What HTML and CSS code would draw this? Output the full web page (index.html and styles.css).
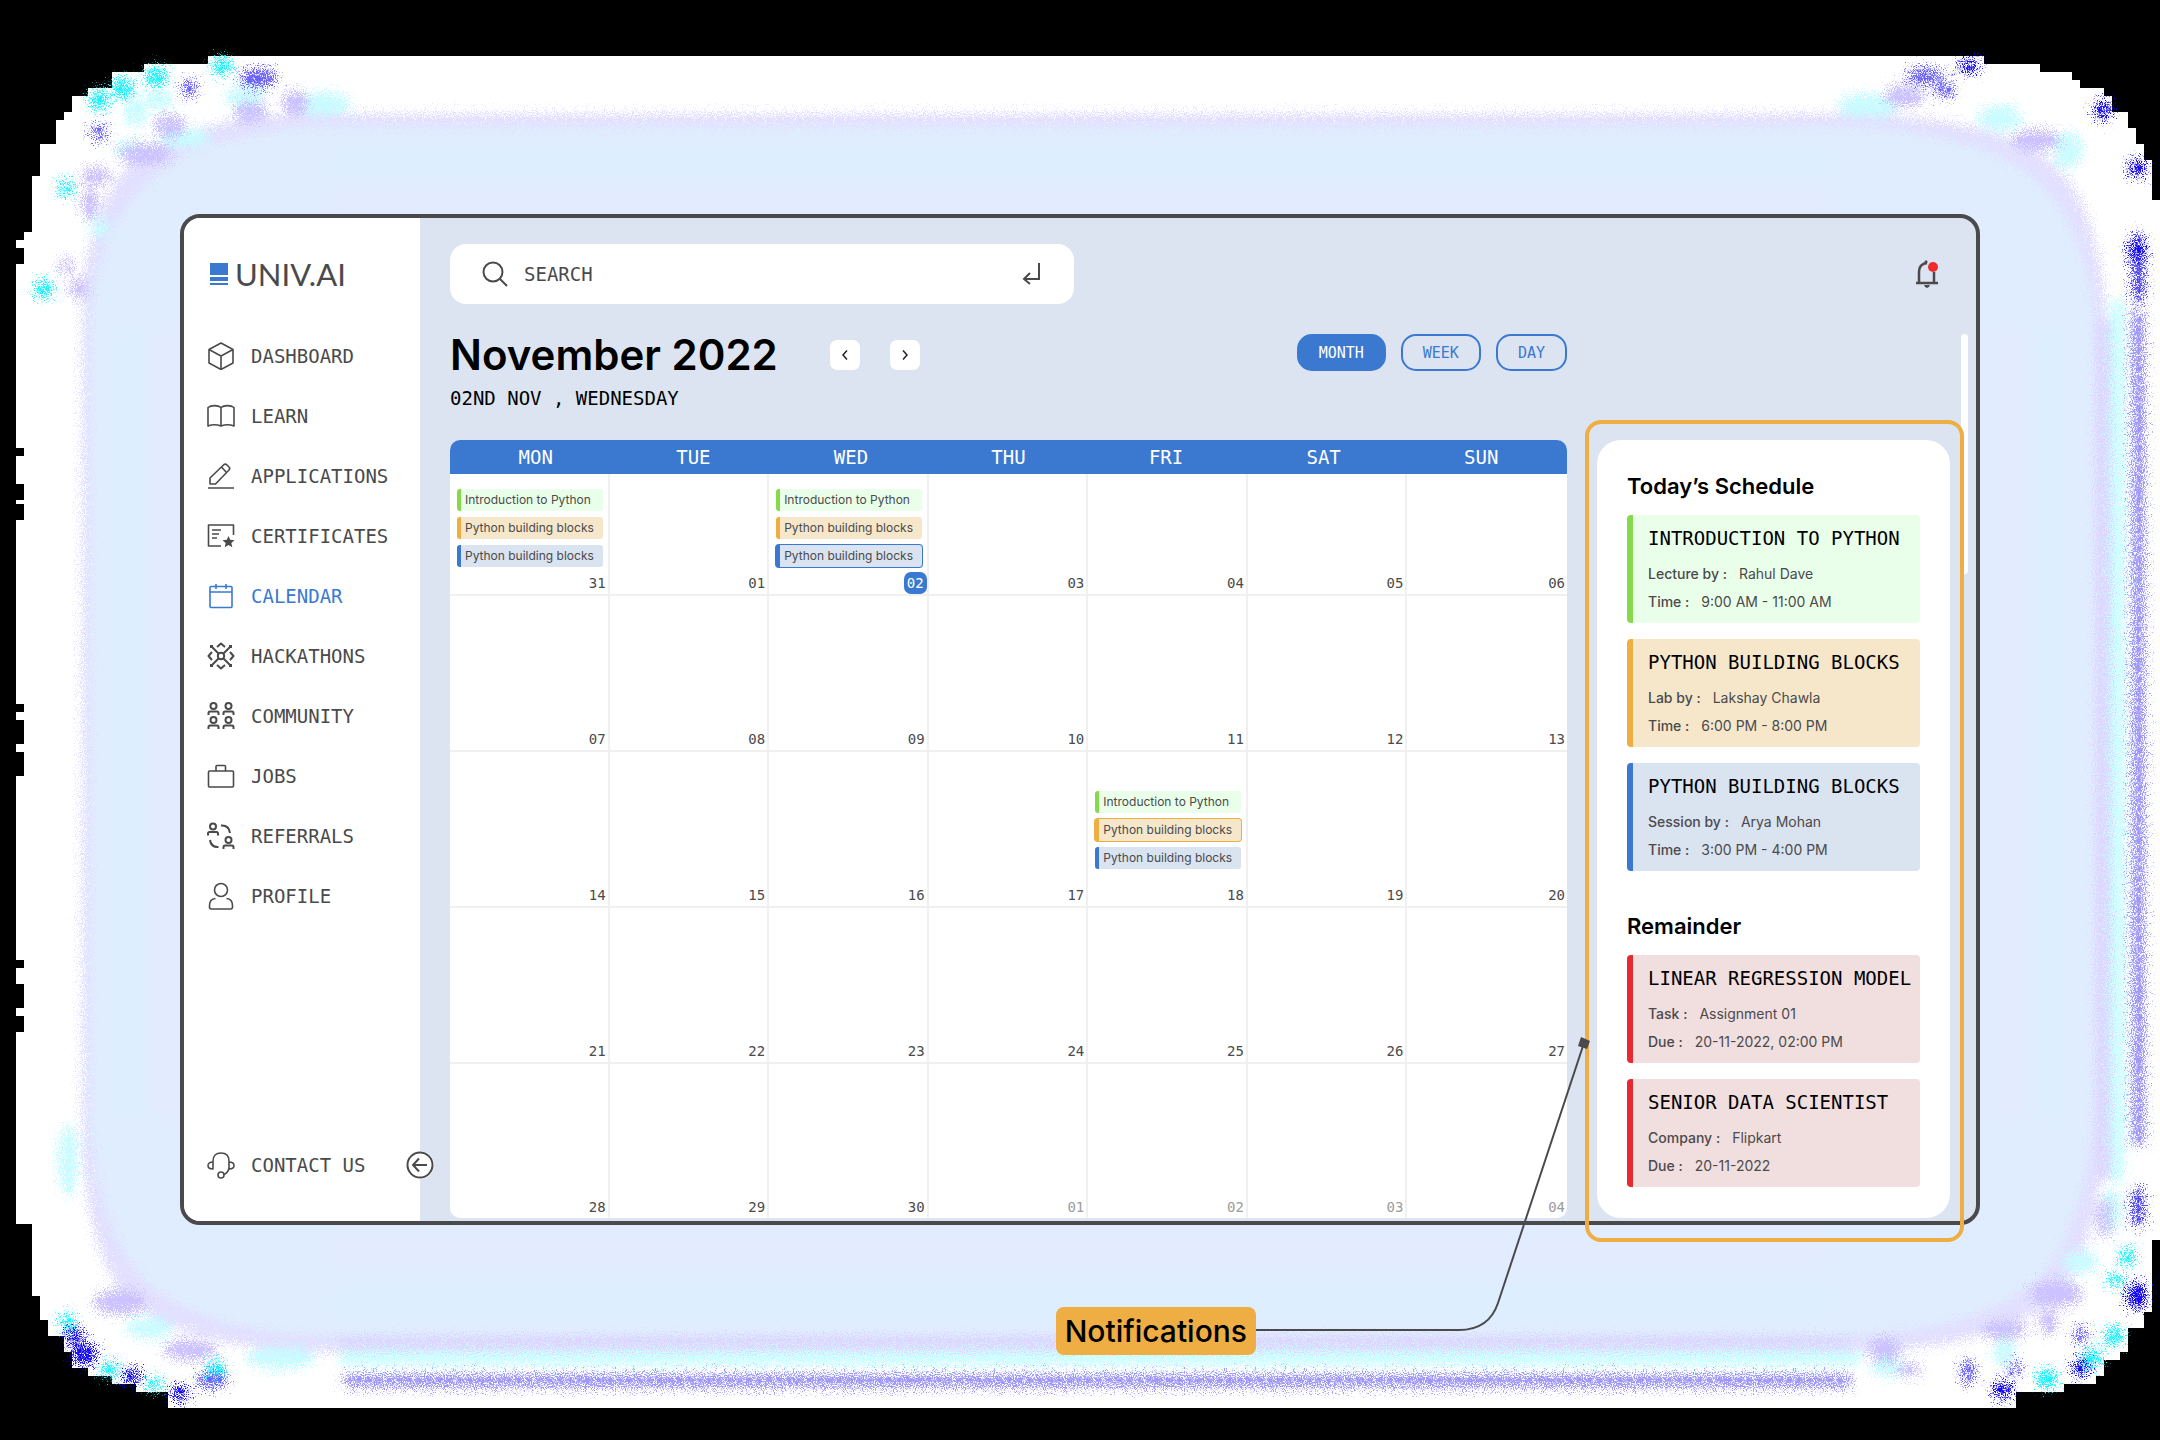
FILE: index.html
```html
<!DOCTYPE html>
<html lang="en">
<head>
<meta charset="utf-8">
<title>UNIV.AI Calendar</title>
<meta name="viewport" content="width=device-width, initial-scale=1">
<link rel="stylesheet" href="styles.css">
</head>
<body>
<div class="stage">
  <svg class="backdrop" viewBox="0 0 2160 1440" preserveAspectRatio="none" aria-hidden="true">
    <defs>
      <filter id="spray" x="-50" y="-50" width="2260" height="1540" filterUnits="userSpaceOnUse" color-interpolation-filters="sRGB">
        <feGaussianBlur in="SourceGraphic" stdDeviation="2" result="soft"/>
        <feTurbulence type="fractalNoise" baseFrequency="0.9" numOctaves="1" seed="4" result="noise"/>
        <feDisplacementMap in="soft" in2="noise" scale="44" xChannelSelector="R" yChannelSelector="G"/>
      </filter>
      <filter id="soft" x="-50" y="-50" width="2260" height="1540" filterUnits="userSpaceOnUse"><feGaussianBlur stdDeviation="10"/></filter>
    </defs>
    <path fill="#fff" d="M208 56H1984V64H2040V72H2072V80H2080V88H2104V96H2112V112H2128V128H2136V144H2144V160H2152V200H2160V1240H2152V1312H2144V1328H2128V1352H2120V1360H2104V1376H2096V1384H2064V1392H2016V1408H168V1392H136V1384H112V1376H88V1368H72V1352H64V1336H48V1320H40V1296H32V1224H16V1032H24V1016H16V1008H24V984H16V968H24V960H16V776H24V752H16V744H24V720H16V712H24V704H16V520H24V504H16V500H24V484H16V456H24V448H16V264H24V248H16V240H24V232H32V176H40V144H56V120H64V112H72V96H88V88H112V72H144V64H208Z"/>
    <g filter="url(#spray)">
      <path fill="#e2dfff" d="M310 114H1850Q2020 116 2068 180 2104 230 2106 330V1100Q2104 1230 2064 1290 2010 1350 1840 1352H330Q170 1350 120 1290 84 1240 82 1120V310Q84 220 126 168 180 116 310 114Z"/>
      <path fill="#e0edff" d="M330 126H1840Q2000 132 2050 195 2090 240 2094 330V1100Q2090 1210 2046 1270 1990 1332 1840 1336H330Q190 1332 140 1275 94 1220 90 1110V320Q96 235 144 186 200 130 330 126Z"/>
      <path stroke="#ccffff" stroke-width="14" d="M340 1358H1860M2117 300V1180"/>
      <path stroke="#dcd6ff" stroke-width="12" d="M340 1342H1850M2104 320V1180"/>
      <path stroke="#9b93f8" stroke-width="11" d="M345 1381H1850M2138 310V1145"/>
      <path stroke="#4a40ee" stroke-width="10" d="M2138 235V300M2138 1190V1225"/>
      <g fill="#c9fbff">
        <ellipse cx="322" cy="104" rx="28" ry="12"/><ellipse cx="135" cy="112" rx="10" ry="14"/><ellipse cx="158" cy="100" rx="14" ry="9"/>
        <ellipse cx="185" cy="138" rx="26" ry="10"/><ellipse cx="130" cy="148" rx="16" ry="8"/><ellipse cx="245" cy="96" rx="20" ry="9"/>
        <ellipse cx="1868" cy="106" rx="30" ry="12"/><ellipse cx="2000" cy="118" rx="22" ry="12"/><ellipse cx="2068" cy="150" rx="14" ry="18"/>
        <ellipse cx="280" cy="1358" rx="34" ry="11"/><ellipse cx="150" cy="1328" rx="24" ry="10"/><ellipse cx="68" cy="1160" rx="9" ry="36"/>
        <ellipse cx="2080" cy="1262" rx="18" ry="11"/><ellipse cx="2004" cy="1352" rx="10" ry="14"/><ellipse cx="1890" cy="1368" rx="20" ry="8"/>
        <ellipse cx="2112" cy="1210" rx="9" ry="22"/><ellipse cx="100" cy="228" rx="9" ry="10"/>
      </g>
      <g fill="#cbc2ff">
        <ellipse cx="295" cy="103" rx="12" ry="12"/><ellipse cx="250" cy="112" rx="16" ry="10"/><ellipse cx="170" cy="126" rx="15" ry="11"/>
        <ellipse cx="145" cy="154" rx="26" ry="10"/><ellipse cx="96" cy="176" rx="15" ry="8"/><ellipse cx="90" cy="204" rx="8" ry="16"/>
        <ellipse cx="66" cy="266" rx="7" ry="7"/><ellipse cx="78" cy="288" rx="8" ry="10"/><ellipse cx="1905" cy="96" rx="20" ry="10"/>
        <ellipse cx="2036" cy="140" rx="24" ry="10"/><ellipse cx="2056" cy="1294" rx="26" ry="13"/><ellipse cx="2004" cy="1330" rx="22" ry="9"/>
        <ellipse cx="2048" cy="1322" rx="9" ry="12"/><ellipse cx="1885" cy="1350" rx="16" ry="12"/><ellipse cx="1908" cy="1370" rx="12" ry="6"/>
        <ellipse cx="2104" cy="1218" rx="7" ry="20"/><ellipse cx="120" cy="1302" rx="26" ry="12"/><ellipse cx="190" cy="1350" rx="26" ry="10"/>
      </g>
      <g fill="#6a60f8">
        <ellipse cx="258" cy="78" rx="18" ry="8"/><ellipse cx="189" cy="88" rx="7" ry="7"/><ellipse cx="99" cy="132" rx="7" ry="7"/>
        <ellipse cx="1925" cy="76" rx="18" ry="7"/><ellipse cx="1945" cy="90" rx="10" ry="6"/><ellipse cx="2015" cy="1368" rx="5" ry="6"/>
        <ellipse cx="1968" cy="1372" rx="6" ry="12"/><ellipse cx="2081" cy="1335" rx="6" ry="7"/><ellipse cx="212" cy="1380" rx="14" ry="7"/>
      </g>
      <g fill="#1408f0">
        <ellipse cx="1969" cy="66" rx="10" ry="6"/><ellipse cx="2103" cy="110" rx="8" ry="8"/><ellipse cx="2137" cy="168" rx="8" ry="8"/>
        <ellipse cx="2137" cy="250" rx="8" ry="10"/><ellipse cx="2137" cy="1296" rx="9" ry="13"/><ellipse cx="2081" cy="1368" rx="8" ry="8"/>
        <ellipse cx="2003" cy="1390" rx="9" ry="8"/><ellipse cx="84" cy="1354" rx="12" ry="10"/><ellipse cx="132" cy="1376" rx="8" ry="7"/>
        <ellipse cx="180" cy="1393" rx="8" ry="7"/><ellipse cx="74" cy="1336" rx="8" ry="7"/>
      </g>
      <g fill="#19f4ff">
        <ellipse cx="222" cy="66" rx="9" ry="8"/><ellipse cx="156" cy="77" rx="10" ry="9"/><ellipse cx="123" cy="88" rx="10" ry="9"/>
        <ellipse cx="99" cy="100" rx="9" ry="9"/><ellipse cx="66" cy="188" rx="7" ry="7"/><ellipse cx="44" cy="289" rx="8" ry="8"/>
        <ellipse cx="2114" cy="1336" rx="9" ry="8"/><ellipse cx="2092" cy="1358" rx="9" ry="8"/><ellipse cx="2047" cy="1379" rx="9" ry="9"/>
        <ellipse cx="2127" cy="1257" rx="7" ry="7"/><ellipse cx="2115" cy="1280" rx="7" ry="6"/><ellipse cx="68" cy="1322" rx="7" ry="7"/>
        <ellipse cx="110" cy="1370" rx="8" ry="7"/><ellipse cx="155" cy="1384" rx="7" ry="6"/><ellipse cx="216" cy="1368" rx="7" ry="8"/>
      </g>
    </g>
    <g filter="url(#soft)" fill="none">
      <path stroke="#dceeff" stroke-width="26" d="M330 165H1830M330 1302H1830M130 330V1120M2050 330V1120"/>
      <path stroke="#e4eaff" stroke-width="22" d="M330 200H1830M330 1250H1830M165 330V1120M2010 330V1120"/>
    </g>
  </svg>

  <div class="window">
    <aside class="sidebar">
      <a class="logo" href="#" aria-label="UNIV.AI home">
        <svg width="18" height="22" viewBox="0 0 18 22" fill="#3b79d0"><path d="M0 0H18V12H0zM0 14H18V18H0zM0 20H18V22H0z"/></svg>
        <span>UNIV.AI</span>
      </a>
      <nav class="nav">
        <a href="#"><svg class="icon" viewBox="0 0 28 28"><path d="M14 1 26 7.500V21L14 27.500 2 21V7.500zM2 7.500 14 14l12-6.500M14 14V27.500"/></svg>Dashboard</a>
        <a href="#"><svg class="icon" viewBox="0 0 28 28"><path d="M1 24V5.500C4 3 11 3 14 5.500 17 3 24 3 27 5.500V24c-4-1.500-9-1.500-13 0-4-1.500-9-1.500-13 0zM14 5.500V24"/></svg>Learn</a>
        <a href="#"><svg class="icon" viewBox="0 0 28 28"><path d="M1 26H27M3 22v-6L17 2.500Q18.500 1.500 20 3L22 5Q23.500 6.500 22 8L8.500 22zM14.500 5 19.500 10.500"/></svg>Applications</a>
        <a href="#"><svg class="icon" viewBox="0 0 28 28"><path d="M26.500 13V3H1.500V24H14M5 8H14M5 12H12M5 16H10"/><path fill="currentColor" stroke="none" d="m21.500 14 1.700 3.800 4.300.4-3.200 2.800 1 4.200-3.800-2.200-3.800 2.200 1-4.200-3.200-2.800 4.300-.4z"/></svg>Certificates</a>
        <a href="#" class="active" aria-current="page"><svg class="icon" viewBox="0 0 28 28"><path d="M4 4.500H24Q25 4.500 25 5.500V24Q25 25.500 24 25.500H4Q3 25.500 3 24.500V5.500Q3 4.500 4 4.500zM3 10H25M9 2V7M19 2V7"/></svg>Calendar</a>
        <a href="#"><svg class="icon icon-bold" viewBox="0 0 28 28"><circle cx="14" cy="14" r="3.200"/><path d="M4.500 4.500 11.500 11.500M23.500 4.500 16.500 11.500M4.500 23.500 11.500 16.500M23.500 23.500 16.500 16.500M10 5 14 1.500 18 5M10 23 14 26.500 18 23M5 10 1.500 14 5 18M23 10 26.500 14 23 18"/><path fill="currentColor" stroke="none" d="M3 3h3v3H3zM22 3h3v3h-3zM3 22h3v3H3zM22 22h3v3h-3z"/></svg>Hackathons</a>
        <a href="#"><svg class="icon icon-bold" viewBox="0 0 28 28"><g id="pair"><circle cx="6.500" cy="4" r="3"/><path d="M1.500 13V11Q1.500 9.500 3 9.500H10Q11.500 9.500 11.500 11V13"/><circle cx="21.500" cy="4" r="3"/><path d="M16.500 13V11Q16.500 9.500 18 9.500H25Q26.500 9.500 26.500 11V13"/></g><use href="#pair" y="14"/></svg>Community</a>
        <a href="#"><svg class="icon" viewBox="0 0 28 28"><rect x="1.500" y="9" width="25" height="16" rx="1"/><path d="M9 9V4.500Q9 3.500 10 3.500H17.500Q18.500 3.500 18.500 4.500V9"/></svg>Jobs</a>
        <a href="#"><svg class="icon icon-bold" viewBox="0 0 28 28"><circle cx="6" cy="4.500" r="3"/><path d="M1 13.500V11.500Q1 10 2.500 10H9.500Q11 10 11 11.500V13.500"/><circle cx="21.500" cy="18" r="3"/><path d="M16.500 27V25Q16.500 23.500 18 23.500H25Q26.500 23.500 26.500 25V27M14 3.500Q22 3 23 11M3 18Q4 25.500 11.500 25"/></svg>Referrals</a>
        <a href="#"><svg class="icon" viewBox="0 0 28 28"><circle cx="14" cy="8" r="6.500"/><path d="M8.500 16.500Q2.500 17 2.500 23.500V25Q2.500 27 4.500 27H23.500Q25.500 27 25.500 25V23.500Q25.500 17 19.500 16.500"/></svg>Profile</a>
        <a href="#" class="contact"><svg class="icon" viewBox="0 0 28 28"><path d="M6 18V10C6 5 9 2 14 2s8 3 8 8v6c0 4-2 6-5 7.500M6 11C3 11 1 12 1 14.500S3 18 6 18zM22 11c3 0 5 1 5 3.500S25 18 22 18z"/><circle cx="14" cy="24" r="3"/></svg>Contact us</a>
      </nav>
      <button class="collapse" type="button" aria-label="Collapse menu"><svg width="28" height="28" viewBox="0 0 28 28" fill="none" stroke="#4a4a4c" stroke-width="2"><circle cx="14" cy="14" r="12.500" fill="#fff"/><path d="M21 14H7M13 7.500 7 14 13 20.500"/></svg></button>
    </aside>

    <main class="main">
      <header class="topbar">
        <form class="search" role="search">
          <label for="q" aria-label="Search"><svg width="26" height="26" viewBox="0 0 26 26" fill="none" stroke="#4a4a4c" stroke-width="2"><circle cx="11" cy="11" r="9.500"/><path d="M18 18 25 25"/></svg></label>
          <input id="q" type="text" placeholder="SEARCH">
          <button type="submit" aria-label="Submit search"><svg width="20" height="24" viewBox="0 0 20 24" fill="none" stroke="#4a4a4c" stroke-width="2"><path d="M17 1V17H2M8 11 2 17 8 22"/></svg></button>
        </form>
        <button class="bell" type="button" aria-label="Notifications, new"><svg width="26" height="30" viewBox="0 0 26 30" fill="none" stroke="#4a4a4c" stroke-width="2.500"><path d="M13 4Q5 5 5 13V23M20 13V23M2 24H24M11 4 13 2"/><path stroke="none" fill="#4a4a4c" d="M10 26H16Q15 29 13 29T10 26z"/><circle cx="19" cy="8" r="5" fill="#ee2b2e" stroke="none"/></svg></button>
      </header>

      <div class="content">
        <div class="heading">
          <div>
            <div class="title-row">
              <h1>November 2022</h1>
              <button class="step" type="button" aria-label="Previous month"><svg width="8" height="12" viewBox="0 0 8 12"><path d="M6 1.500 2 6 6 10.500"/></svg></button>
              <button class="step" type="button" aria-label="Next month"><svg width="8" height="12" viewBox="0 0 8 12"><path d="M2 1.500 6 6 2 10.500"/></svg></button>
            </div>
            <p class="today">02ND NOV , WEDNESDAY</p>
          </div>
          <div class="views">
            <button type="button" class="view view-on" aria-pressed="true">MONTH</button>
            <button type="button" class="view">WEEK</button>
            <button type="button" class="view">DAY</button>
          </div>
        </div>

        <table class="calendar">
          <thead><tr><th>MON</th><th>TUE</th><th>WED</th><th>THU</th><th>FRI</th><th>SAT</th><th>SUN</th></tr></thead>
          <tbody>
            <tr class="short">
              <td><ul><li class="event green">Introduction to Python</li><li class="event amber">Python building blocks</li><li class="event blue">Python building blocks</li></ul><time>31</time></td>
              <td><time>01</time></td>
              <td><ul><li class="event green">Introduction to Python</li><li class="event amber">Python building blocks</li><li class="event blue picked">Python building blocks</li></ul><time class="current">02</time></td>
              <td><time>03</time></td><td><time>04</time></td><td><time>05</time></td><td><time>06</time></td>
            </tr>
            <tr><td><time>07</time></td><td><time>08</time></td><td><time>09</time></td><td><time>10</time></td><td><time>11</time></td><td><time>12</time></td><td><time>13</time></td></tr>
            <tr>
              <td><time>14</time></td><td><time>15</time></td><td><time>16</time></td><td><time>17</time></td>
              <td><ul><li class="event green">Introduction to Python</li><li class="event amber picked">Python building blocks</li><li class="event blue">Python building blocks</li></ul><time>18</time></td>
              <td><time>19</time></td><td><time>20</time></td>
            </tr>
            <tr><td><time>21</time></td><td><time>22</time></td><td><time>23</time></td><td><time>24</time></td><td><time>25</time></td><td><time>26</time></td><td><time>27</time></td></tr>
            <tr><td><time>28</time></td><td><time>29</time></td><td><time>30</time></td><td><time class="out">01</time></td><td><time class="out">02</time></td><td><time class="out">03</time></td><td><time class="out">04</time></td></tr>
          </tbody>
        </table>

        <section class="panel">
          <h2>Today’s Schedule</h2>
          <div class="cards">
            <article class="card green"><h3>Introduction to Python</h3><p><b>Lecture by :</b>Rahul Dave</p><p><b>Time :</b>9:00 AM - 11:00 AM</p></article>
            <article class="card amber"><h3>Python building blocks</h3><p><b>Lab by :</b>Lakshay Chawla</p><p><b>Time :</b>6:00 PM - 8:00 PM</p></article>
            <article class="card blue"><h3>Python building blocks</h3><p><b>Session by :</b>Arya Mohan</p><p><b>Time :</b>3:00 PM - 4:00 PM</p></article>
          </div>
          <h2 class="second">Remainder</h2>
          <div class="cards">
            <article class="card red"><h3>Linear regression model</h3><p><b>Task :</b>Assignment 01</p><p><b>Due :</b>20-11-2022, 02:00 PM</p></article>
            <article class="card red"><h3>Senior data scientist</h3><p><b>Company :</b>Flipkart</p><p><b>Due :</b>20-11-2022</p></article>
          </div>
          <div class="focus"></div>
          <svg class="connector" width="340" height="300" viewBox="0 0 340 300" aria-hidden="true"><path d="M0 295H203Q233 295 242 268L328 8" fill="none" stroke="#4a4a4c" stroke-width="2"/><path d="M325 2 334 6 331 14 322 11z" fill="#4a4a4c"/></svg>
        </section>
      </div>
      <div class="scroll-thumb"></div>
    </main>
  </div>
  <p class="callout"><span>Notifications</span></p>
</div>
</body>
</html>
```
FILE: styles.css
```css
:root {
  --ink: #4a4a4c;
  --brand: #3b79d0;
  --mist: #dbe4f0;
  --orange: #eeae43;
  --mono: "DejaVu Sans Mono", monospace;
  --sans: Inter, sans-serif;
}

* { box-sizing: border-box; }

body { margin: 0; background: #000; font-family: var(--sans); color: var(--ink); }
h1, h2, h3, p, ul { margin: 0; padding: 0; }
ul { list-style: none; }
button { font: inherit; color: inherit; border: 0; padding: 0; background: none; cursor: pointer; }
a { color: inherit; text-decoration: none; }
svg { display: block; flex: none; }

.stage { position: relative; min-height: 100vh; padding: 214px 180px 80px; }
.backdrop { position: absolute; inset: 0; width: 100%; height: 100%; }

.window {
  position: relative;
  display: grid;
  grid-template-columns: 236px minmax(0, 1fr);
  border: 4px solid var(--ink);
  border-radius: 20px;
  background: var(--mist);
}

/* Sidebar */
.sidebar {
  position: relative;
  display: flex;
  flex-direction: column;
  padding: 38px 0 26px 23px;
  background: #fff;
  border-radius: 16px 0 0 16px;
}
.logo { display: flex; align-items: center; gap: 7px; height: 36px; padding-left: 3px; font: 400 31px/36px Lato, sans-serif; }
.nav { flex: 1; display: flex; flex-direction: column; margin-top: 34px; font: 19px/60px var(--mono); text-transform: uppercase; }
.nav a { display: flex; align-items: center; gap: 16px; height: 60px; }
.nav .active { color: var(--brand); }
.nav .contact { margin-top: auto; }
.icon { width: 28px; height: 28px; fill: none; stroke: currentColor; stroke-width: 1.6; stroke-linejoin: round; }
.icon-bold { stroke-width: 2; }
.collapse { position: absolute; right: -14px; bottom: 42px; border-radius: 50%; background: #fff; }

/* Main area */
.main { position: relative; padding: 26px 26px 3px 30px; min-width: 0; }
.topbar { display: flex; align-items: center; justify-content: space-between; padding-right: 10px; }
.search {
  display: flex;
  align-items: center;
  width: 624px;
  height: 60px;
  padding: 0 32px;
  border-radius: 16px;
  background: #fff;
}
.search input {
  flex: 1;
  min-width: 0;
  margin-left: 16px;
  padding: 0;
  border: 0;
  outline: 0;
  background: none;
  font: 19px/24px var(--mono);
}
.search input::placeholder { color: var(--ink); opacity: 1; }

.content {
  display: grid;
  grid-template-columns: minmax(0, 1fr) 353px;
  column-gap: 30px;
  margin-top: 30px;
}
.heading { display: flex; justify-content: space-between; align-items: flex-start; height: 106px; grid-column: 1; }
.title-row { display: flex; align-items: center; gap: 30px; height: 42px; }
h1 { margin-right: 22px; color: #000; font-size: 42px; line-height: 42px; font-weight: 600; white-space: nowrap; }
.step { display: grid; place-items: center; width: 30px; height: 30px; border-radius: 7px; background: #fff; }
.step path { fill: none; stroke: #222; stroke-width: 1.5; }
.today { margin-top: 10px; color: #000; font: 19px/24px var(--mono); white-space: pre; }
.views { display: flex; gap: 15px; }
.view { height: 37px; padding: 0 20px; border: 2px solid var(--brand); border-radius: 15px; color: var(--brand); font: 15px/20px var(--mono); }
.view-on { background: var(--brand); color: #fff; }

/* Month grid */
.calendar { display: block; grid-column: 1; border-radius: 10px; background: #fff; overflow: hidden; }
.calendar thead, .calendar tbody { display: block; }
.calendar tr { display: grid; grid-template-columns: repeat(7, minmax(0, 1fr)); }
.calendar thead tr { padding: 0 7px; background: var(--brand); }
.calendar th { padding: 0; color: #fff; font: 19px/34px var(--mono); font-weight: 400; }
.calendar tbody tr { height: 156px; }
.calendar tbody tr.short { height: 122px; }
.calendar tbody tr:last-child { height: 154px; }
.calendar td {
  display: flex;
  flex-direction: column;
  padding: 39px 2px 0 7px;
  border-right: 2px solid #f0f0f0;
  border-bottom: 2px solid #f0f0f0;
}
.calendar .short td { padding-top: 15px; }
.calendar td:last-child { border-right: 0; }
.calendar tr:last-child td { border-bottom: 0; }
.calendar ul { display: grid; gap: 6px; padding-right: 3px; }
.calendar time { margin: auto 0 0 auto; font: 14px/22px var(--mono); }
.calendar .current { padding: 0 3px; margin-right: -2px; border-radius: 7px; background: var(--brand); color: #fff; }
.calendar .out { color: #9c9c9e; }

.green { --edge: #86d94b; --fill: #eaffe9; }
.amber { --edge: #eeae43; --fill: #f6e7cb; }
.blue { --edge: #3b79d0; --fill: #dae3f0; }
.red { --edge: #e52b30; --fill: #f1dede; }

.event {
  height: 22px;
  padding-left: 4px;
  border-left: 4px solid var(--edge);
  border-radius: 3px;
  background: var(--fill);
  font-size: 12px;
  line-height: 22px;
  white-space: nowrap;
}
.picked { box-shadow: 0 0 0 1px var(--edge); }

/* Schedule panel */
.panel { position: relative; padding: 32px 30px 31px; border-radius: 24px; background: #fff; }
h2 { margin-bottom: 15px; color: #000; font-size: 22px; line-height: 28px; font-weight: 600; }
.second { margin-top: 41px; }
.cards { display: grid; gap: 16px; }
.card { padding: 9px 0 7px 15px; border-left: 6px solid var(--edge); border-radius: 4px; background: var(--fill); font-size: 14px; line-height: 28px; }
.card h3 { margin-bottom: 8px; color: #000; font: 19px/28px var(--mono); text-transform: uppercase; white-space: nowrap; }
.card b { margin-right: 12px; font-weight: 500; }

.scroll-thumb { position: absolute; top: 116px; right: 8px; width: 7px; height: 240px; border-radius: 4px; background: #fff; }
.focus { position: absolute; z-index: 2; inset: -20px -14px -24px -12px; border: 4px solid var(--orange); border-radius: 16px; pointer-events: none; }
.connector { position: absolute; z-index: 3; top: 595px; left: -341px; pointer-events: none; }

.callout { position: relative; display: flex; justify-content: flex-end; margin: 82px 724px 0 0; }
.callout span { padding: 0 9px; border-radius: 8px; background: var(--orange); color: #000; font-size: 30px; line-height: 48px; font-weight: 500; }
```
